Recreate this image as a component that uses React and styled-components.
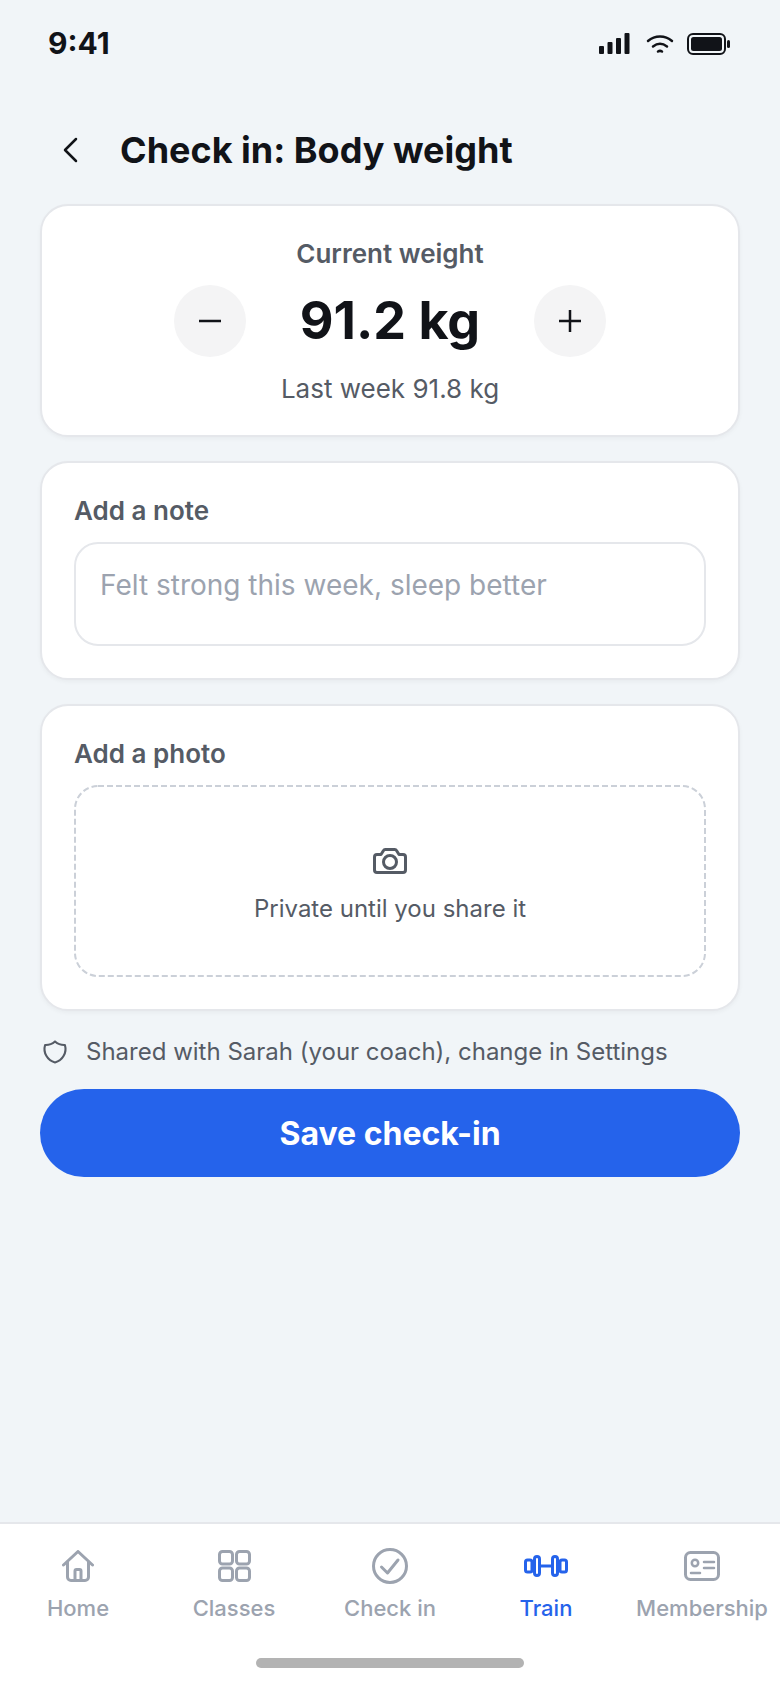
import React from "react"
import styled, { createGlobalStyle } from "styled-components"

const GlobalStyle = createGlobalStyle`
    * {
        box-sizing: border-box;
    }
    html, body {
        margin: 0;
        padding: 0;
        background: #f1f5f8;
        font-family: Inter, "Liberation Sans", sans-serif;
    }
`;

const Page = styled.div`
    width: 780px;
    height: 1688px;
    display: flex;
    flex-direction: column;
    background: #f1f5f8;
    color: #111318;
    overflow: hidden;
`;

const StatusBar = styled.div`
    height: 86px;
    padding: 24px 48px 0 48px;
    display: flex;
    justify-content: space-between;
    align-items: flex-start;
`;

const Time = styled.div`
    font-size: 30px;
    line-height: 38px;
    font-weight: 700;
`;

const StatusIcons = styled.div`
    display: flex;
    align-items: center;
    gap: 13px;
    margin-top: 9px;
    margin-right: 1px;
`;

const Header = styled.header`
    height: 118px;
    padding: 10px 40px 0 62px;
    display: flex;
    align-items: center;
    gap: 42px;
`;

const Title = styled.h1`
    margin: 0;
    font-size: 36px;
    line-height: 44px;
    font-weight: 700;
`;

const Main = styled.main`
    flex: 1;
    padding: 0 40px;
    display: flex;
    flex-direction: column;
    gap: 24px;
`;

const Card = styled.section`
    background: #fff;
    border: 2px solid #e5e7eb;
    border-radius: 28px;
    padding: 32px 32px ${props => props.$center ? "30px" : "32px"};
    box-shadow: 0 2px 4px rgba(0,0,0,.04);
    display: flex;
    flex-direction: column;
    align-items: ${props => props.$center ? "center" : "stretch"};
`;

const Label = styled.div`
    font-size: 26px;
    line-height: 32px;
    font-weight: 600;
    color: #555b65;
`;

const Stepper = styled.div`
    margin-top: 15px;
    display: flex;
    align-items: center;
    gap: 54px;
`;

const RoundButton = styled.button`
    width: 72px;
    height: 72px;
    padding: 0;
    border: none;
    border-radius: 50%;
    background: #f4f4f5;
    color: #111318;
    display: flex;
    align-items: center;
    justify-content: center;
`;

const Weight = styled.div`
    font-size: 52px;
    line-height: 72px;
    font-weight: 700;
    white-space: nowrap;
`;

const Sub = styled.div`
    margin-top: 16px;
    font-size: 26px;
    line-height: 32px;
    color: #555b65;
`;

const NoteInput = styled.div`
    margin-top: 15px;
    height: 104px;
    border: 2px solid #e5e7eb;
    border-radius: 24px;
    padding: 24px 24px 0;
    font-size: 28px;
    line-height: 34px;
    color: #9ca3af;
`;

const DropZone = styled.div`
    position: relative;
    margin-top: 15px;
    height: 192px;
    padding-top: 10px;
    display: flex;
    flex-direction: column;
    align-items: center;
    justify-content: center;
    gap: 20px;
    color: #555b65;
    font-size: 24px;
    line-height: 30px;
`;

const DashedFrame = styled.svg`
    position: absolute;
    top: 0;
    left: 0;
    pointer-events: none;
`;

const Notice = styled.div`
    margin-top: 2px;
    padding-left: 1px;
    display: flex;
    align-items: center;
    gap: 17px;
    font-size: 24px;
    line-height: 30px;
    color: #555b65;
`;

const SaveButton = styled.button`
    height: 88px;
    margin-top: -2px;
    border: none;
    border-radius: 44px;
    background: #2563eb;
    color: #fff;
    font-family: inherit;
    font-size: 32px;
    font-weight: 700;
`;

const TabBar = styled.nav`
    height: 166px;
    background: #fff;
    border-top: 2px solid #e5e7eb;
    display: flex;
    flex-direction: column;
`;

const Tabs = styled.div`
    display: grid;
    grid-template-columns: repeat(5, 156px);
    padding-top: 20px;
`;

const Tab = styled.div`
    display: flex;
    flex-direction: column;
    align-items: center;
    gap: 6px;
    font-size: 22px;
    line-height: 28px;
    font-weight: 500;
    color: ${props => props.$active ? "#2563eb" : "#9ca3af"};
    white-space: nowrap;
`;

const TabIcon = styled.div`
    height: 44px;
    display: flex;
    align-items: center;
    justify-content: center;
`;

const HomeIndicator = styled.div`
    width: 268px;
    height: 10px;
    margin: 36px auto 0;
    border-radius: 5px;
    background: #b3b3b3;
`;

const tabs = [
    {
        name: "Home",
        icon: (
            <svg width="32" height="32" viewBox="0 0 32 32" fill="none" stroke="currentColor" strokeWidth="3" strokeLinecap="round" strokeLinejoin="round">
                <path d="M1.500 15L16 1.500 30.500 15" />
                <path d="M5.500 12v15a3.500 3.500 0 0 0 3.500 3.500h14a3.500 3.500 0 0 0 3.500-3.500V12" />
                <path d="M13 30V21a1.500 1.500 0 0 1 1.500-1.500h3A1.500 1.500 0 0 1 19 21v9" />
            </svg>
        ),
    },
    {
        name: "Classes",
        icon: (
            <svg width="33" height="32" viewBox="0 0 33 32" fill="none" stroke="currentColor" strokeWidth="3">
                <rect x="1.500" y="1.500" width="13" height="12.500" rx="3" />
                <rect x="18.500" y="1.500" width="13" height="12.500" rx="3" />
                <rect x="1.500" y="18" width="13" height="12.500" rx="3" />
                <rect x="18.500" y="18" width="13" height="12.500" rx="3" />
            </svg>
        ),
    },
    {
        name: "Check in",
        icon: (
            <svg width="36" height="36" viewBox="0 0 36 36" fill="none" stroke="currentColor" strokeWidth="3" strokeLinecap="round" strokeLinejoin="round">
                <circle cx="18" cy="18" r="16.500" />
                <path d="M9.500 19l6 6 10.500-13" />
            </svg>
        ),
    },
    {
        name: "Train",
        active: true,
        icon: (
            <svg width="44" height="22" viewBox="0 0 44 22" fill="none" stroke="currentColor" strokeWidth="3">
                <rect x="1.500" y="5" width="6.500" height="12" rx="2" />
                <rect x="10.500" y="1.500" width="5" height="19" rx="2.500" />
                <rect x="28.500" y="1.500" width="5" height="19" rx="2.500" />
                <rect x="36" y="5" width="6.500" height="12" rx="2" />
                <path d="M16 11h12" />
            </svg>
        ),
    },
    {
        name: "Membership",
        icon: (
            <svg width="36" height="30" viewBox="0 0 36 30" fill="none" stroke="currentColor" strokeWidth="3" strokeLinecap="round">
                <rect x="1.500" y="1.500" width="33" height="27" rx="5" />
                <circle cx="11" cy="12" r="3.200" strokeWidth="2.500" />
                <path d="M20 11h10M20 17h10M7 22h9" strokeWidth="2.500" />
            </svg>
        ),
    },
]

const App = () => {
    return (
        <Page>
            <GlobalStyle />
            <StatusBar>
                <Time>9:41</Time>
                <StatusIcons>
                    <svg width="34" height="22" viewBox="0 0 34 22" fill="#111318">
                        <rect x="0" y="13" width="5" height="8" rx="1" />
                        <rect x="8.500" y="9" width="5" height="12" rx="1" />
                        <rect x="17" y="5" width="5" height="16" rx="1" />
                        <rect x="25.500" y="0" width="5" height="21" rx="1" />
                    </svg>
                    <svg width="28" height="20" viewBox="0 0 28 20" fill="none" stroke="#111318" strokeWidth="2.500" strokeLinecap="round">
                        <path d="M2 7c7-6 17-6 24 0" />
                        <path d="M7 12.500c4.500-3.500 9.500-3.500 14 0" />
                        <path d="M12 17.500c1.300-.8 2.700-.8 4 0" />
                    </svg>
                    <svg width="44" height="22" viewBox="0 0 44 22" fill="none">
                        <rect x="1" y="1" width="37" height="20" rx="5" stroke="#111318" strokeWidth="2" />
                        <rect x="4" y="4" width="31" height="14" rx="2.500" fill="#111318" />
                        <rect x="40" y="7" width="3" height="8" rx="1.500" fill="#111318" />
                    </svg>
                </StatusIcons>
            </StatusBar>
            <Header>
                <svg width="16" height="26" viewBox="0 0 16 26" fill="none" stroke="#111318" strokeWidth="2.500" strokeLinecap="round" strokeLinejoin="round">
                    <path d="M14 2L3 13l11 11" />
                </svg>
                <Title>Check in: Body weight</Title>
            </Header>
            <Main>
                <Card $center>
                    <Label>Current weight</Label>
                    <Stepper>
                        <RoundButton>
                            <svg width="22" height="4" viewBox="0 0 22 4"><path d="M0 2h22" stroke="currentColor" strokeWidth="2.500" /></svg>
                        </RoundButton>
                        <Weight>91.2 kg</Weight>
                        <RoundButton>
                            <svg width="22" height="22" viewBox="0 0 22 22"><path d="M0 11h22M11 0v22" stroke="currentColor" strokeWidth="2.500" /></svg>
                        </RoundButton>
                    </Stepper>
                    <Sub>Last week 91.8 kg</Sub>
                </Card>
                <Card>
                    <Label>Add a note</Label>
                    <NoteInput>Felt strong this week, sleep better</NoteInput>
                </Card>
                <Card>
                    <Label>Add a photo</Label>
                    <DropZone>
                        <DashedFrame width="632" height="192" viewBox="0 0 632 192" fill="none">
                            <rect x="1" y="1" width="630" height="190" rx="23" stroke="#cbd0d8" strokeWidth="2" strokeDasharray="6 3" />
                        </DashedFrame>
                        <svg width="34" height="26" viewBox="0 0 34 26" fill="none" stroke="currentColor" strokeWidth="3" strokeLinejoin="round">
                            <path d="M1.500 9A2.500 2.500 0 0 1 4 6.500h4l2.500-4a2 2 0 0 1 1.700-1h9.600a2 2 0 0 1 1.700 1l2.500 4h4A2.500 2.500 0 0 1 32.500 9v13a2.500 2.500 0 0 1-2.500 2.500H4A2.500 2.500 0 0 1 1.500 22z" />
                            <circle cx="17" cy="14" r="6.500" />
                        </svg>
                        Private until you share it
                    </DropZone>
                </Card>
                <Notice>
                    <svg width="28" height="28" viewBox="0 0 24 24" fill="none" stroke="currentColor" strokeWidth="1.800" strokeLinecap="round" strokeLinejoin="round">
                        <path d="M12 3a12 12 0 0 0 8.500 3a12 12 0 0 1-8.500 15a12 12 0 0 1-8.500-15a12 12 0 0 0 8.500-3" />
                    </svg>
                    Shared with Sarah (your coach), change in Settings
                </Notice>
                <SaveButton>Save check-in</SaveButton>
            </Main>
            <TabBar>
                <Tabs>
                    {tabs.map(tab => (
                        <Tab key={tab.name} $active={tab.active}>
                            <TabIcon>{tab.icon}</TabIcon>
                            {tab.name}
                        </Tab>
                    ))}
                </Tabs>
                <HomeIndicator />
            </TabBar>
        </Page>
    )
}

export default App
